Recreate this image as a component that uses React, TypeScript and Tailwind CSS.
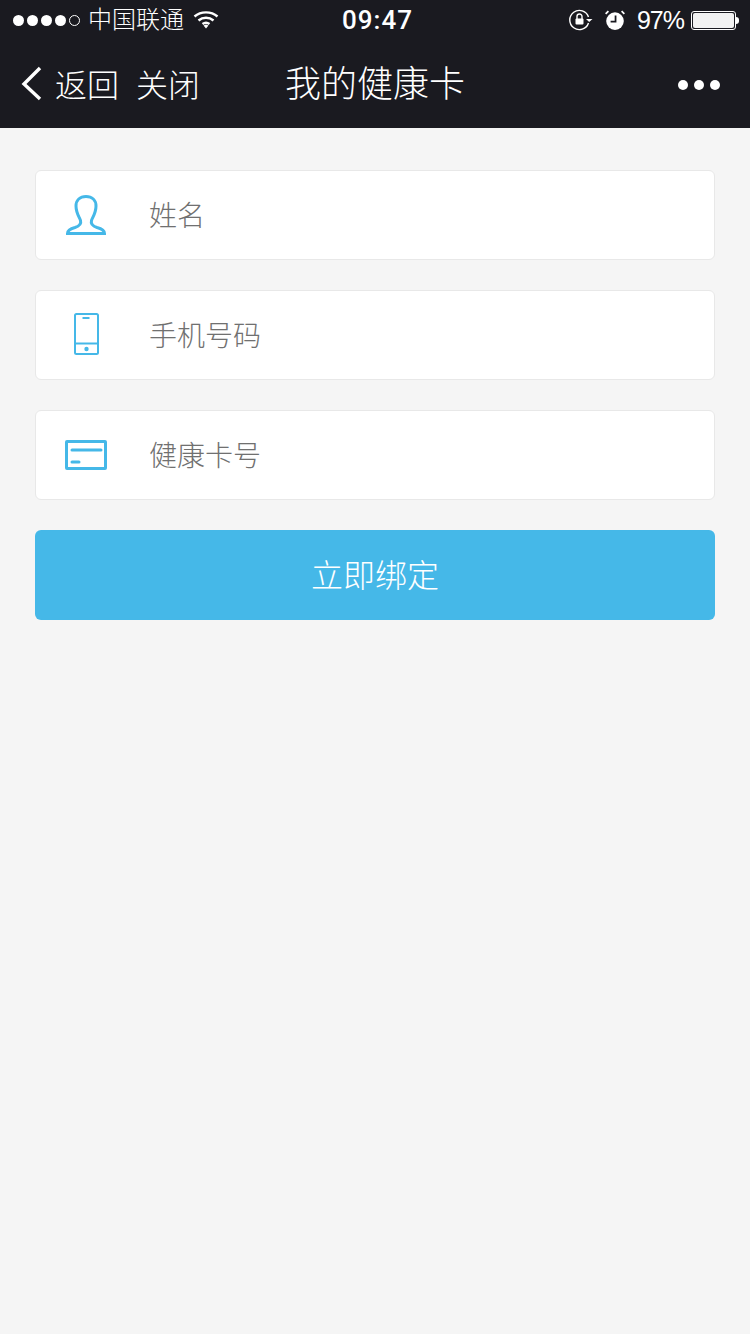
import React from "react";

const CJK = "font-['Liberation_Sans','Noto_Sans_CJK_SC',sans-serif]";

const StatusBar = () => (
    <div className="flex items-center justify-between h-10 pl-[13px] pr-[11px] text-white">
        <div className="flex items-center w-[300px]">
            <div className="flex items-center gap-[3px]">
                <span className="w-[11px] h-[11px] rounded-full bg-white" />
                <span className="w-[11px] h-[11px] rounded-full bg-white" />
                <span className="w-[11px] h-[11px] rounded-full bg-white" />
                <span className="w-[11px] h-[11px] rounded-full bg-white" />
                <span className="w-[11px] h-[11px] rounded-full border border-white" />
            </div>
            <span className="ml-[8px] text-[24px] leading-10 font-light">中国联通</span>
            <svg width="26" height="20" viewBox="0 0 26 20" className="ml-[9px]" fill="none" stroke="#fff" strokeWidth="2.4">
                <path d="M1.5 6.5C7.8 1 18.2 1 24.5 6.5" />
                <path d="M5.5 10.5C9.8 6.8 16.2 6.8 20.5 10.5" />
                <path d="M9.5 14C11.6 12.4 14.4 12.4 16.5 14" />
                <path d="M10.5 15.4L13 14.4L15.5 15.4L13 18.4Z" fill="#fff" stroke="none" />
            </svg>
        </div>
        <span className="absolute left-[342px] top-0 leading-10 text-[26px] font-['Roboto',sans-serif] font-medium tracking-[1px]">09:47</span>
        <div className="flex items-center">
            <svg width="24" height="22" viewBox="0 0 24 22" fill="none" stroke="#fff" strokeWidth="1.4">
                <path d="M19.5 8A9.6 9.6 0 1 0 19.5 14" />
                <rect x="6.5" y="9.5" width="8" height="6" rx="1" fill="#fff" stroke="none" />
                <path d="M8 10V7.5a2.5 2.5 0 0 1 5 0V10" />
                <path d="M17 10H23.5L20.2 13Z" fill="#fff" stroke="none" />
            </svg>
            <svg width="22" height="22" viewBox="0 0 20 20" className="ml-[11px]" fill="none">
                <circle cx="10" cy="11" r="8" fill="#fff" />
                <path d="M10.5 6V11.5H6" stroke="#1a1a20" strokeWidth="1.6" />
                <path d="M1.5 4.5L4 2M18.5 4.5L16 2" stroke="#fff" strokeWidth="1.6" />
            </svg>
            <span className="ml-[11px] text-[25px] leading-10 font-['Liberation_Sans',sans-serif] font-light tracking-[-1px]">97%</span>
            <div className="ml-[7px] flex items-center">
                <div className="w-[45px] h-[19px] rounded-[3px] border border-white p-px">
                    <div className="w-full h-full bg-[#f2f2f2] rounded-[2px]" />
                </div>
                <div className="w-[3px] h-[7px] bg-white rounded-r-sm" />
            </div>
        </div>
    </div>
);

const NavBar = () => (
    <div className="relative flex items-center h-[88px] text-white">
        <svg width="24" height="36" viewBox="0 0 24 36" className="ml-[20px]" fill="none" stroke="#fff" strokeWidth="3.4">
            <path d="M20 2L4 18L20 33" />
        </svg>
        <span className="ml-[11px] pt-1 text-[32px] leading-[84px] font-light">返回</span>
        <span className="ml-[17px] pt-1 text-[32px] leading-[84px] font-light">关闭</span>
        <span className="absolute inset-x-0 top-[1px] text-center text-[36px] leading-[88px] font-light">我的健康卡</span>
        <div className="ml-auto mr-[30px] flex items-center gap-[6px] mt-[2px]">
            <span className="w-[10px] h-[10px] rounded-full bg-white" />
            <span className="w-[10px] h-[10px] rounded-full bg-white" />
            <span className="w-[10px] h-[10px] rounded-full bg-white" />
        </div>
    </div>
);

interface FieldProps {
    label: string;
    icon: React.ReactNode;
}

const Field: React.FC<FieldProps> = ({ label, icon }) => (
    <div className="flex items-center h-[90px] bg-white border border-[#e8e8e8] rounded-[6px]">
        <div className="w-[113px] flex justify-center pr-[13px]">{icon}</div>
        <span className="pt-1 text-[28px] font-light text-[#707070]">{label}</span>
    </div>
);

const PersonIcon = () => (
    <svg width="40" height="40" viewBox="0 0 40 40" fill="none" stroke="#45b8e8" strokeWidth="3">
        <path d="M1.5 38.5C1.5 35 5 33.5 9 32.5C13.5 31 15.5 29 14.5 25.5C13.5 22.5 10 18 10 11C10 5 14 1.5 20 1.5C26 1.5 30 5 30 11C30 18 26.5 22.5 25.5 25.5C24.5 29 26.5 31 31 32.5C35 33.5 38.5 35 38.5 38.5Z" />
    </svg>
);

const PhoneIcon = () => (
    <svg width="26" height="44" viewBox="0 0 26 44" className="-mt-[2px]" fill="none" stroke="#45b8e8" strokeWidth="2">
        <rect x="2" y="2" width="23" height="40" rx="1.5" />
        <path d="M2 31.5H25" />
        <path d="M9.5 6H16.5" />
        <circle cx="13.5" cy="37" r="2.2" fill="#45b8e8" stroke="none" />
    </svg>
);

const CardIcon = () => (
    <svg width="42" height="30" viewBox="0 0 42 30" fill="none" stroke="#45b8e8">
        <rect x="1.5" y="1.5" width="39" height="27" rx="0.5" strokeWidth="3" />
        <path d="M7 10H36" strokeWidth="3" strokeLinecap="round" />
        <path d="M7 22H14" strokeWidth="3" strokeLinecap="round" />
    </svg>
);

export default function App() {
    return (
        <div className={`min-h-[1334px] bg-[#f5f5f5] ${CJK}`}>
            <div className="relative bg-[#1a1a20] h-32">
                <StatusBar />
                <NavBar />
            </div>
            <div className="flex flex-col gap-[30px] px-[35px] pt-[42px]">
                <Field label="姓名" icon={<PersonIcon />} />
                <Field label="手机号码" icon={<PhoneIcon />} />
                <Field label="健康卡号" icon={<CardIcon />} />
                <button className="h-[90px] pt-[2px] rounded-[6px] bg-[#45b8e8] text-white text-[32px] font-light">立即绑定</button>
            </div>
        </div>
    );
}
